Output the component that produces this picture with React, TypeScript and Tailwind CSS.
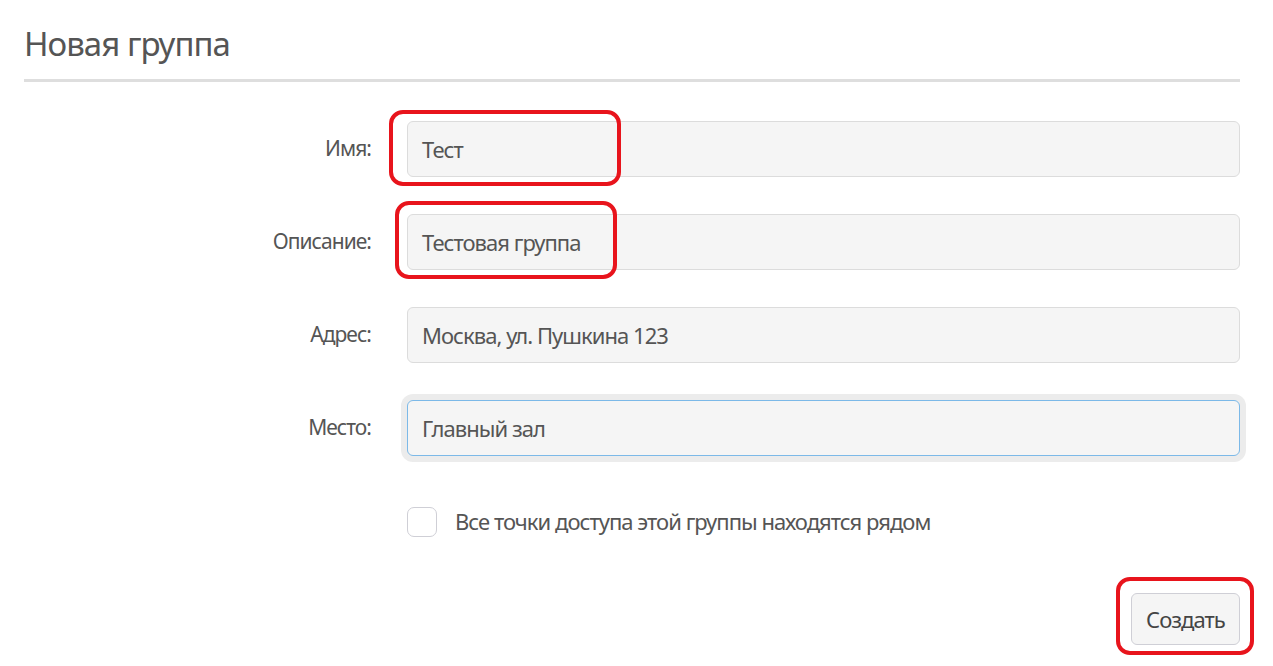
const font = "font-['DejaVu_Sans_Condensed','Roboto',sans-serif] [font-stretch:condensed]";

const fields = [
  { label: "Имя:", value: "Тест" },
  { label: "Описание:", value: "Тестовая группа" },
  { label: "Адрес:", value: "Москва, ул. Пушкина 123" },
  { label: "Место:", value: "Главный зал", focus: true },
];

export default function App() {
  return (
    <div className={`relative h-[666px] w-[1273px] overflow-hidden bg-white ${font} tracking-[-0.06em] text-[#555]`}>
      <div className="px-6 pt-[22px]">
        <h1 className="h-[44px] text-[33px] leading-[44px] text-[#555]">Новая группа</h1>
        <div className="mt-[13px] h-[3px] w-[1216px] bg-[#dedede]" />
        <div className="mt-[39px] flex flex-col gap-[37px]">
          {fields.map((f) => (
            <div key={f.label} className="flex items-center">
              <label className="w-[347px] text-right text-[21px] text-[#555]">{f.label}</label>
              <div
                className={`ml-[36px] flex h-[56px] w-[833px] items-center rounded-[6px] border bg-[#f5f5f5] px-[14px] text-[22px] text-[#555] ${
                  f.focus ? "border-[#7cb9e8] ring-[6px] ring-[#ececec]" : "border-[#dcdcdc]"
                }`}
              >
                {f.value}
              </div>
            </div>
          ))}
        </div>
        <div className="mt-[49px] flex items-center pl-[383px]">
          <div className="h-[30px] w-[30px] rounded-[7px] border border-[#cfcfd6] bg-white" />
          <span className="ml-[18px] text-[22px] text-[#555]">Все точки доступа этой группы находятся рядом</span>
        </div>
        <div className="mt-[55px] flex justify-end pr-[9px]">
          <button className="flex h-[52px] w-[109px] items-center justify-center rounded-[6px] border border-[#cfcfd6] bg-[#f5f5f5] text-[22px] text-[#444]">
            Создать
          </button>
        </div>
      </div>
      <div className="absolute left-[389px] top-[110px] h-[76px] w-[232px] rounded-[14px] border-[4px] border-[#e8141c]" />
      <div className="absolute left-[395px] top-[201px] h-[78px] w-[222px] rounded-[14px] border-[4px] border-[#e8141c]" />
      <div className="absolute left-[1116px] top-[577px] h-[78px] w-[138px] rounded-[14px] border-[4px] border-[#e8141c]" />
    </div>
  );
}
